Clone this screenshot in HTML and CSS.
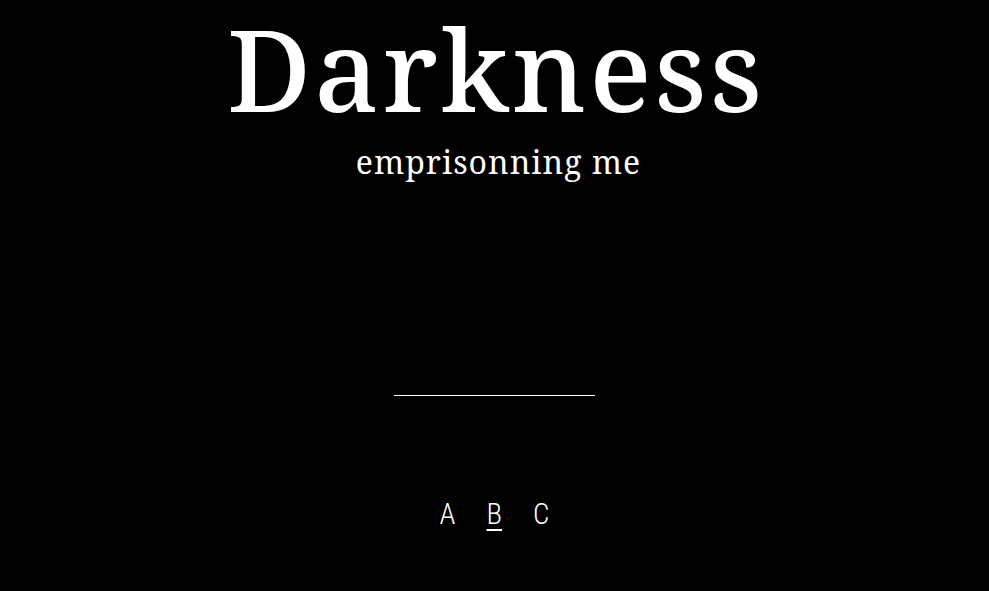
FILE: index.html
```html
<html>
<head>
	<title>Darkness</title>
	<link rel="stylesheet" href="styles.css">
</head>
<body>
	<div id="page">
		<div id="header">
			<h1>Darkness</h1>
			<h2>emprisonning me</h2>
		</div>
		<div class="rule"></div>
		<div id="pages">
			<a href="#a">A</a>
			<a href="#b" class="current">B</a>
			<a href="#c">C</a>
		</div>
	</div>
</body>
</html>
```
FILE: styles.css
```css
*
{
	margin: 0px;
	padding: 0px;
	color: white;
}
body
{
	background-color: black;
	height: 100%;
	overflow: hidden;
}
#page
{
	display: flex;
	flex-direction: column;
	align-items: center;
}
#header
{
	text-align: center;
	font-family: "Noto Serif", "Droid Serif", serif;
}
h1
{
	font-size: 114px;
	font-weight: 500;
	font-stretch: semi-expanded;
	line-height: 135px;
	letter-spacing: 3px;
	margin-right: -3px;
}
h2
{
	font-size: 32px;
	font-weight: normal;
	line-height: 53px;
	letter-spacing: 1px;
	padding-left: 8px;
}
.rule
{
	width: 201px;
	height: 1px;
	background: white;
	margin: 207px 0px 0px 0px;
}
#pages
{
	display: flex;
	gap: 31px;
	margin: 101px 0px 0px 0px;
	font-family: "Roboto Condensed", "Roboto", sans-serif;
	font-weight: 300;
	font-size: 29px;
	line-height: 34px;
}
#pages a
{
	text-decoration: none;
}
#pages a.current
{
	text-decoration: underline;
	text-decoration-thickness: 2px;
	text-underline-offset: 5px;
}
```
